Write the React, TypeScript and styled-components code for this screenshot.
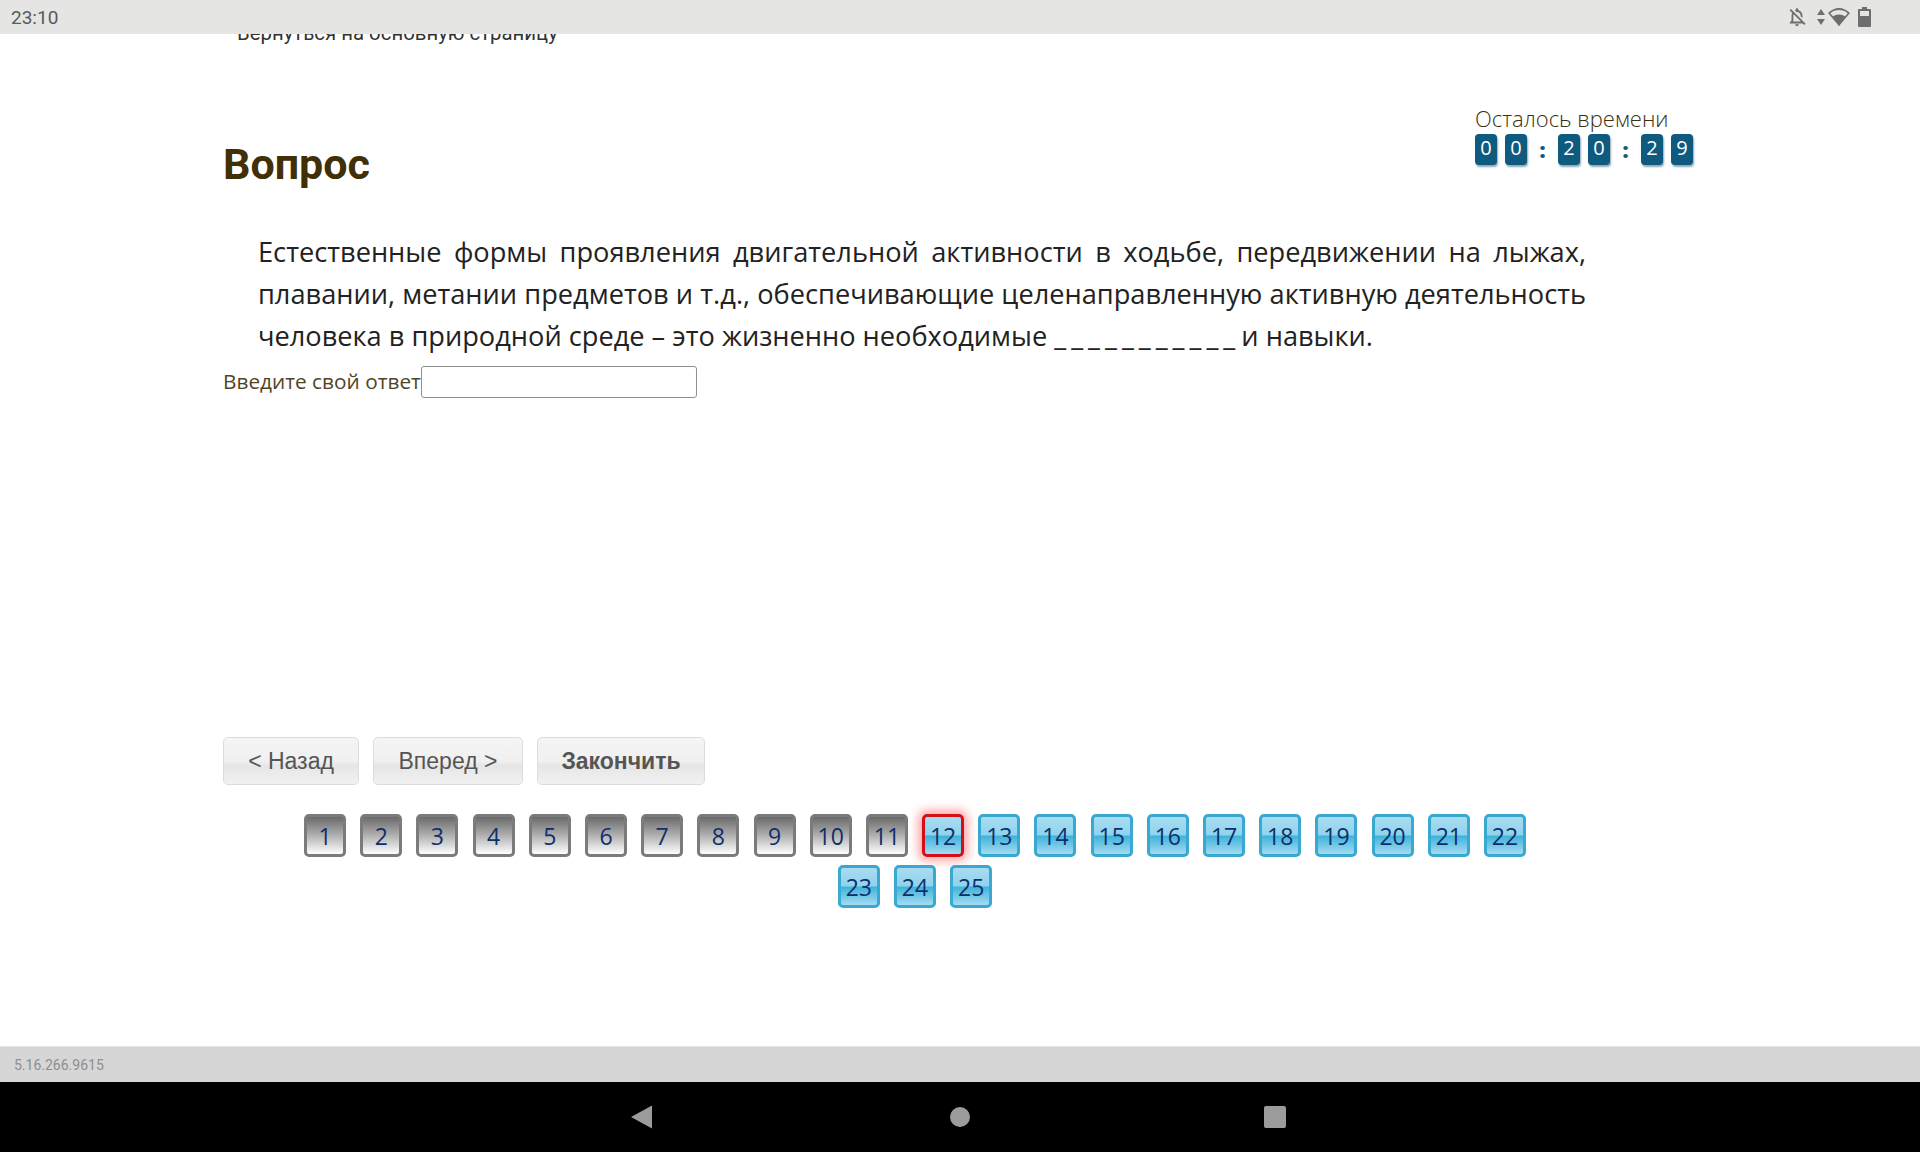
import React from 'react'
import styled, { createGlobalStyle } from 'styled-components'
import { MdOutlineNotificationsOff } from 'react-icons/md'

const GlobalStyle = createGlobalStyle`
  html, body {
    margin: 0;
    padding: 0;
    background: #ffffff;
  }
`

const Page = styled.div`
  width: 1920px;
  height: 1152px;
  display: flex;
  flex-direction: column;
  overflow: hidden;
  font-family: "Open Sans", "Liberation Sans", sans-serif;
`

const StatusBar = styled.div`
  height: 34px;
  flex: none;
  background: #e5e5e4;
  display: flex;
  align-items: center;
  justify-content: space-between;
  padding: 0 49px 0 11px;
  position: relative;
  z-index: 2;
`

const Clock = styled.span`
  font-family: Roboto, sans-serif;
  font-size: 19px;
  color: #5a5a58;
`

const StatusIcons = styled.div`
  display: flex;
  align-items: center;
  color: #6e6e6e;
`

const Main = styled.main`
  flex: 1;
  min-height: 0;
  padding-left: 223px;
  overflow: hidden;
`

const BackLink = styled.div`
  margin: -1px 0 0 14px;
  height: 24px;
  line-height: 24px;
  transform: translateY(-12px);
  font-family: Roboto, sans-serif;
  font-size: 20.4px;
  color: #333333;
`

const Header = styled.div`
  width: 1470px;
  height: 174px;
  display: flex;
  justify-content: space-between;
  align-items: flex-start;
`

const Title = styled.h1`
  margin: 82px 0 0;
  font-family: Roboto, sans-serif;
  font-weight: 700;
  font-size: 43px;
  line-height: 50px;
  color: #412f07;
`

const TimerBox = styled.div`
  margin-top: 48px;
  width: 218px;
`

const TimerLabel = styled.div`
  font-family: "Open Sans", sans-serif;
  font-size: 22px;
  line-height: 26px;
  color: #3c2f10;
  font-weight: 300;
  white-space: nowrap;
`

const TimerRow = styled.div`
  display: flex;
  align-items: center;
  margin-top: 3px;
`

const Digit = styled.span`
  flex: none;
  width: 22px;
  height: 31px;
  margin-right: 8px;
  border-radius: 4px;
  background: #0f5a7f;
  box-shadow: 1px 2px 2px #8fa6b8;
  color: #ffffff;
  font-family: "Open Sans", sans-serif;
  font-size: 20px;
  line-height: 28px;
  text-align: center;
  &:last-child {
    margin-right: 0;
  }
`

const Colon = styled.span`
  flex: none;
  width: 15px;
  margin: 0 8px 0 0;
  color: #0f5a7f;
  font-family: "Open Sans", sans-serif;
  font-weight: 800;
  font-size: 21px;
  line-height: 30px;
  text-align: center;
`

const Question = styled.div`
  width: 1328px;
  margin: 0 0 0 35px;
  font-family: "Open Sans", sans-serif;
  font-size: 27.2px;
  line-height: 42px;
  color: #222222;
`

const JustifiedLines = styled.p`
  margin: 0;
  text-align: justify;
  text-align-last: justify;
`

const LastLine = styled.p`
  margin: 0;
`

const Blank = styled.span`
  letter-spacing: 5px;
  margin-right: -6px;
`

const AnswerRow = styled.div`
  display: flex;
  align-items: center;
  margin-top: 9px;
`

const AnswerLabel = styled.label`
  margin-top: -2px;
  font-size: 20.8px;
  color: #4f4526;
`

const AnswerInput = styled.input`
  width: 276px;
  height: 32px;
  box-sizing: border-box;
  border: 1px solid #8f8f8f;
  border-radius: 3px;
  background: #ffffff;
`

const Actions = styled.div`
  display: flex;
  gap: 14px;
  margin-top: 339px;
`

const ActionButton = styled.button<{ $w: number; $bold?: boolean }>`
  width: ${p => p.$w}px;
  height: 48px;
  padding: 0;
  border: 1px solid #dcdcdc;
  border-radius: 5px;
  background: linear-gradient(#f5f5f5 0%, #f0f0f0 50%, #e6e6e6 60%, #f1f1f1 100%);
  color: #555555;
  font-family: "Liberation Sans", sans-serif;
  font-size: 23px;
  font-weight: ${p => (p.$bold ? 700 : 400)};
`

const Pager = styled.div`
  width: 1224px;
  margin-top: 29px;
  padding: 0 80px;
  display: flex;
  flex-wrap: wrap;
  justify-content: center;
  gap: 8px 14.2px;
`

const tones = {
  done: `
    border-color: #7b7b7b;
    background: linear-gradient(#6a6a6a 0%, #a9a9a9 45%, #ffffff 100%);
  `,
  todo: `
    border-color: #3aa9d1;
    background: linear-gradient(#a9dcf0 0%, #8fd3ed 48%, #3fb3dc 52%, #a5dcf1 100%);
  `,
  current: `
    border-color: #d3101a;
    background: linear-gradient(#a9dcf0 0%, #8fd3ed 48%, #3fb3dc 52%, #a5dcf1 100%);
    box-shadow: 0 0 10px 4px rgba(255, 60, 60, 0.45);
  `,
}

const PageButton = styled.button<{ $tone: keyof typeof tones }>`
  width: 42px;
  height: 43px;
  padding: 1px 0 0;
  box-sizing: border-box;
  border: 3px solid;
  border-radius: 5px;
  color: #0e2f6b;
  font-family: "Open Sans", sans-serif;
  font-size: 23px;
  line-height: 30px;
  ${p => tones[p.$tone]}
`

const VersionBar = styled.div`
  height: 36px;
  flex: none;
  background: #d6d6d6;
  border-top: 1px solid #e3e3e3;
  box-sizing: border-box;
  display: flex;
  align-items: center;
  padding-left: 14px;
  font-family: Roboto, sans-serif;
  font-size: 14px;
  color: #8e8e8e;
`

const NavBar = styled.div`
  height: 70px;
  flex: none;
  background: #000000;
  display: flex;
  align-items: center;
  justify-content: center;
  gap: 293px;
`

const NavIcon = styled.svg`
  width: 22px;
  height: 24px;
  fill: #9b9b9b;
  overflow: visible;
`

const digitsOf = (v: string) => v.split('')

export default function App() {
  const buttons = Array.from({ length: 25 }, (_, i) => i + 1)
  return (
    <Page>
      <GlobalStyle />
      <StatusBar>
        <Clock>23:10</Clock>
        <StatusIcons>
          <MdOutlineNotificationsOff size={22} style={{ marginRight: 9 }} />
          <svg width="8" height="16" viewBox="0 0 8 16" fill="#6e6e6e" style={{ marginRight: 3 }}>
            <path d="M4 0 8 6H0zM4 16 0 10h8z" />
          </svg>
          <svg width="22" height="18" viewBox="0 0 22 18" fill="#6e6e6e" style={{ marginRight: 8 }}>
            <path d="M11 18 0 5C3 2 7 0 11 0s8 2 11 5zM2.300 5.200 11 15.500l8.700-10.300C17.300 3.200 14.300 2 11 2S4.700 3.200 2.300 5.200z" fillRule="evenodd" />
            <path d="M4.700 8.500C6.400 7.200 8.600 6.400 11 6.400s4.600.8 6.300 2.100L11 18z" />
          </svg>
          <svg width="13" height="20" viewBox="0 0 13 20" fill="#6e6e6e">
            <path d="M4 0h5v2h3a1 1 0 0 1 1 1v16a1 1 0 0 1-1 1H1a1 1 0 0 1-1-1V3a1 1 0 0 1 1-1h3zM2 4v5h9V4z" fillRule="evenodd" />
          </svg>
        </StatusIcons>
      </StatusBar>

      <Main>
        <BackLink>Вернуться на основную страницу</BackLink>
        <Header>
          <Title>Вопрос</Title>
          <TimerBox>
            <TimerLabel>Осталось времени</TimerLabel>
            <TimerRow>
              {digitsOf('00').map((d, i) => <Digit key={i}>{d}</Digit>)}
              <Colon>:</Colon>
              {digitsOf('20').map((d, i) => <Digit key={i}>{d}</Digit>)}
              <Colon>:</Colon>
              {digitsOf('29').map((d, i) => <Digit key={i}>{d}</Digit>)}
            </TimerRow>
          </TimerBox>
        </Header>

        <Question>
          <JustifiedLines>
            Естественные формы проявления двигательной активности в ходьбе, передвижении на лыжах,
            плавании, метании предметов и т.д., обеспечивающие целенаправленную активную деятельность
          </JustifiedLines>
          <LastLine>
            человека в природной среде – это жизненно необходимые <Blank>___________</Blank> и навыки.
          </LastLine>
        </Question>

        <AnswerRow>
          <AnswerLabel>Введите свой ответ</AnswerLabel>
          <AnswerInput />
        </AnswerRow>

        <Actions>
          <ActionButton $w={136}>&lt; Назад</ActionButton>
          <ActionButton $w={150}>Вперед &gt;</ActionButton>
          <ActionButton $w={168} $bold>Закончить</ActionButton>
        </Actions>

        <Pager>
          {buttons.map(n => (
            <PageButton key={n} $tone={n < 12 ? 'done' : n === 12 ? 'current' : 'todo'}>{n}</PageButton>
          ))}
        </Pager>
      </Main>

      <VersionBar>5.16.266.9615</VersionBar>
      <NavBar>
        <NavIcon viewBox="0 0 22 24"><path d="M18 .5v23L-3 12z" /></NavIcon>
        <NavIcon viewBox="0 0 22 24"><circle cx="11" cy="12" r="10" /></NavIcon>
        <NavIcon viewBox="0 0 22 24"><rect x="0" y="1" width="22" height="22" rx="2" /></NavIcon>
      </NavBar>
    </Page>
  )
}
